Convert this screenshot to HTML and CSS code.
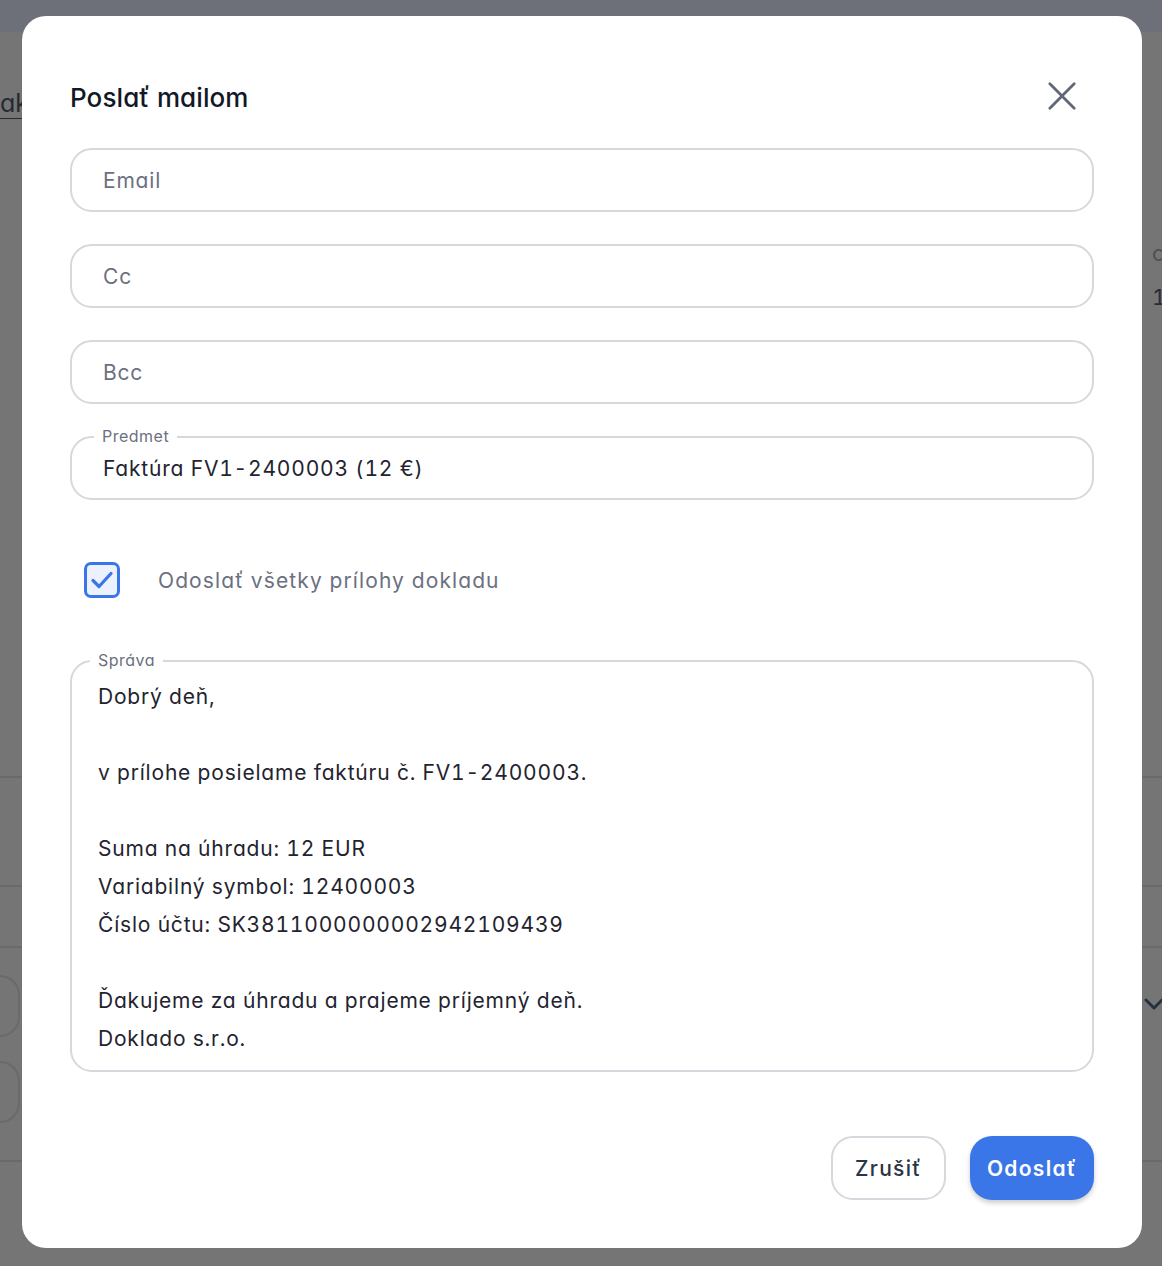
FILE: index.html
```html
<!DOCTYPE html>
<html lang="sk">
  <head>
    <meta charset="UTF-8" />
    <meta name="viewport" content="width=device-width, initial-scale=1.0" />
    <link rel="stylesheet" href="styles.css">
    <title>Poslať mailom</title>
  </head>
  <body>
    <!-- page behind the dialog -->
    <div class="page">
      <div class="topbar"></div>
      <div class="page-head">
        <a class="crumb" href="#">ak</a>
        <div class="side-info">
          <span class="side-label">c</span>
          <span class="side-value">1</span>
        </div>
      </div>
      <div class="rows">
        <div class="row r1"></div>
        <div class="row r2"></div>
        <div class="row r3">
          <div class="ghost-inputs">
            <div class="ghost-input"></div>
            <div class="ghost-input"></div>
          </div>
          <svg class="ghost-chevron" width="24" height="24" viewBox="0 0 24 24"><path d="M4 8l8 8 8-8" fill="none" stroke="#27303f" stroke-width="3" stroke-linecap="round" stroke-linejoin="round"/></svg>
        </div>
        <div class="row r4"></div>
      </div>
    </div>

    <div class="backdrop">
      <div class="modal">
        <div class="modal-head">
          <h2>Poslať mailom</h2>
          <button class="close" type="button" aria-label="Zavrieť">
            <svg width="32" height="32" viewBox="0 0 32 32"><path d="M3 3l26 26M29 3L3 29" fill="none" stroke="#5f6779" stroke-width="3" stroke-linecap="round"/></svg>
          </button>
        </div>

        <form class="fields">
          <div class="field"><input type="text" placeholder="Email" /></div>
          <div class="field"><input type="text" placeholder="Cc" /></div>
          <div class="field"><input type="text" placeholder="Bcc" /></div>
          <div class="field">
            <label class="float-label">Predmet</label>
            <input type="text" value="Faktúra FV1-2400003 (12 €)" />
          </div>

          <label class="check-row">
            <span class="check-box">
              <svg width="26" height="26" viewBox="0 0 26 26"><path d="M4 13.5l6 6L22 6.5" fill="none" stroke="#3b76e8" stroke-width="3.2" stroke-linecap="round" stroke-linejoin="round"/></svg>
            </span>
            <span class="check-text">Odoslať všetky prílohy dokladu</span>
          </label>

          <div class="field area">
            <label class="float-label">Správa</label>
            <textarea rows="10">Dobrý deň,

v prílohe posielame faktúru č. FV1-2400003.

Suma na úhradu: 12 EUR
Variabilný symbol: 12400003
Číslo účtu: SK3811000000002942109439

Ďakujeme za úhradu a prajeme príjemný deň.
Doklado s.r.o.</textarea>
          </div>
        </form>

        <div class="actions">
          <button class="btn btn-cancel" type="button">Zrušiť</button>
          <button class="btn btn-send" type="button">Odoslať</button>
        </div>
      </div>
    </div>
  </body>
</html>
```

FILE: styles.css
```css
 html, body {
   margin: 0;
   padding: 0;
 }
 body {
   width: 1162px;
   height: 1266px;
   overflow: hidden;
   background: #757575;
   font-family: Inter, "Noto Sans", sans-serif;
   font-feature-settings: "cv11" 1, "tnum" 1;
   color: #1f2430;
 }

 /* background page (already dimmed) */
 .page {
   height: 100%;
 }
 .topbar {
   height: 32px;
   background: #6d7079;
 }
 .page-head {
   display: flex;
   justify-content: space-between;
   height: 744px;
 }
 .crumb {
   margin-top: 56px;
   margin-left: 0;
   height: 30px;
   font-size: 25px;
   line-height: 30px;
   color: #262a33;
   text-decoration: underline;
   text-underline-offset: 6px;
   text-decoration-thickness: 1px;
 }
 .side-info {
   display: flex;
   flex-direction: column;
   gap: 18px;
   margin-top: 208px;
   margin-right: -4px;
   width: 14px;
   font-size: 22px;
 }
 .side-label {
   color: #4e5058;
 }
 .side-value {
   color: #2a2c33;
 }
 .rows .row {
   border-top: 2px solid #6a6a6a;
 }
 .r1 { height: 107px; }
 .r2 { height: 59px; }
 .r3 {
   height: 212px;
   display: flex;
   justify-content: space-between;
 }
 .r4 { height: 100px; }
 .ghost-inputs {
   display: flex;
   flex-direction: column;
   gap: 24px;
   margin-top: 27px;
   margin-left: -40px;
 }
 .ghost-input {
   width: 56px;
   height: 58px;
   border: 2px solid #6a6a6a;
   border-radius: 20px;
 }
 .ghost-chevron {
   margin-top: 44px;
   margin-right: -4px;
 }

 /* dialog */
 .backdrop {
   position: fixed;
   inset: 0;
 }
 .modal {
   position: absolute;
   top: 16px;
   left: 22px;
   width: 1120px;
   height: 1232px;
   box-sizing: border-box;
   padding: 48px;
   background: #fff;
   border-radius: 24px;
   display: flex;
   flex-direction: column;
 }
 .modal-head {
   height: 64px;
   display: flex;
   align-items: center;
   justify-content: space-between;
   margin-bottom: 20px;
 }
 .modal-head h2 {
   margin: 0;
   margin-top: 2px;
   font-size: 26px;
   font-weight: 500;
   color: #121826;
   letter-spacing: 0.1px;
 }
 .close {
   width: 40px;
   height: 40px;
   border: none;
   background: none;
   padding: 0;
   margin-right: 12px;
   display: flex;
   align-items: center;
   justify-content: center;
   cursor: pointer;
 }
 .close svg {
   width: 30px;
   height: 30px;
 }

 .fields {
   display: flex;
   flex-direction: column;
   gap: 32px;
   margin: 0;
 }
 .field {
   position: relative;
 }
 .field input,
 .field textarea {
   display: block;
   width: 100%;
   box-sizing: border-box;
   border: 2px solid #d6d8dd;
   border-radius: 22px;
   font-family: inherit;
   font-feature-settings: "cv11" 1, "tnum" 1;
   font-size: 21px;
   letter-spacing: 0.8px;
   color: #1f2430;
   background: #fff;
   outline: none;
 }
 .field input {
   height: 64px;
   padding: 0 30px 0 31px;
 }
 .field input::placeholder {
   color: #6b7080;
 }
 .float-label {
   position: absolute;
   top: -10px;
   left: 24px;
   padding: 0 8px;
   background: #fff;
   font-size: 16px;
   line-height: 20px;
   letter-spacing: 0.5px;
   color: #6b7080;
 }
 .area .float-label {
   left: 20px;
 }
 .field textarea {
   height: 412px;
   padding: 16px 26px 12px;
   line-height: 38px;
   resize: none;
   overflow: hidden;
 }

 .check-row {
   display: flex;
   align-items: center;
   padding: 30px 0;
   margin-left: 14px;
 }
 .check-box {
   width: 36px;
   height: 36px;
   box-sizing: border-box;
   border: 3px solid #3b76e8;
   border-radius: 7px;
   background: #ebf1fd;
   display: flex;
   align-items: center;
   justify-content: center;
 }
 .check-text {
   margin-left: 38px;
   font-size: 21px;
   letter-spacing: 1.1px;
   color: #6b7080;
 }

 .actions {
   margin-top: auto;
   display: flex;
   justify-content: flex-end;
   gap: 24px;
 }
 .btn {
   height: 64px;
   padding: 0 22px;
   border-radius: 22px;
   font-family: inherit;
   font-feature-settings: "cv11" 1;
   font-size: 21px;
   font-weight: 500;
   letter-spacing: 1.3px;
   cursor: pointer;
 }
 .btn-cancel {
   border: 2px solid #d6d8dd;
   background: #fff;
   color: #2c3446;
 }
 .btn-send {
   border: none;
   background: #3b76e8;
   color: #fff;
   font-weight: 600;
   padding: 0 17px;
   box-shadow: 0 3px 5px rgba(0, 0, 0, 0.2);
 }
```
